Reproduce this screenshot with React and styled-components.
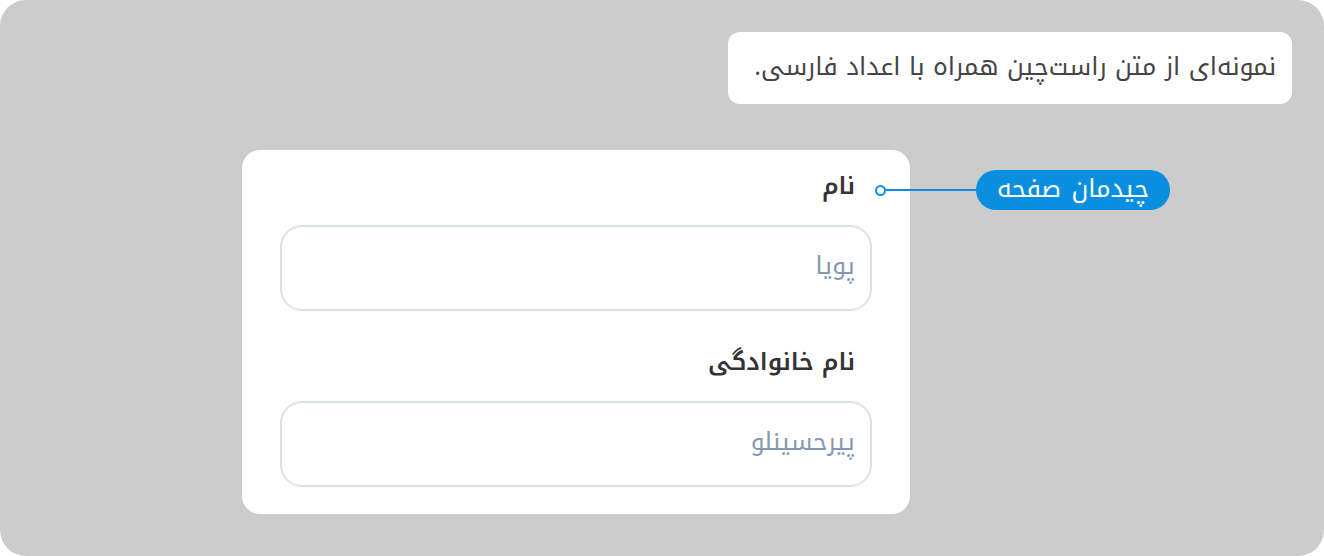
import React from "react";
import styled, { createGlobalStyle } from "styled-components";

const FONT = `"Noto Kufi Arabic", "DejaVu Sans", sans-serif`;

const Global = createGlobalStyle`
  html, body { margin: 0; padding: 0; background: #ffffff; }
  body { font-family: ${FONT}; }
`;

const Canvas = styled.div`
  position: relative;
  width: 1324px;
  height: 556px;
  background: #cccccc;
  border-radius: 26px;
  display: flex;
  flex-direction: column;
  box-sizing: border-box;
  padding-top: 32px;
`;

const Note = styled.div`
  align-self: flex-end;
  margin-right: 32px;
  width: 564px;
  height: 72px;
  box-sizing: border-box;
  background: #ffffff;
  border-radius: 12px;
  direction: rtl;
  display: flex;
  align-items: center;
  padding: 0 16px 2px 8px;
  font-size: 25px;
  line-height: 30px;
  white-space: nowrap;
  color: #454545;
`;

const FormCard = styled.form`
  margin: 46px 0 0 242px;
  width: 668px;
  height: 364px;
  box-sizing: border-box;
  background: #ffffff;
  border-radius: 18px;
  direction: rtl;
  padding: 22px 38px 0;
  display: flex;
  flex-direction: column;
`;

const Label = styled.label`
  display: block;
  padding-right: 17px;
  font-size: 24px;
  line-height: 28px;
  font-weight: 600;
  color: #333333;
  margin-top: ${(p) => p.$top}px;
  margin-bottom: 25px;
`;

const Input = styled.input`
  direction: rtl;
  width: 100%;
  height: 86px;
  box-sizing: border-box;
  border: 2px solid #d9e1ec;
  border-radius: 22px;
  padding: 0 15px 4px;
  font-family: ${FONT};
  font-size: 24.5px;
  color: #3a3a3a;
  background: #ffffff;
  outline: none;
  &::placeholder { color: #8797b2; }
`;

const Annotation = styled.div`
  position: absolute;
  left: 875px;
  top: 170px;
  display: flex;
  align-items: center;
`;

const Dot = styled.span`
  width: 7px;
  height: 7px;
  border: 2px solid #0a8fe0;
  border-radius: 50%;
  background: #ffffff;
`;

const Line = styled.span`
  width: 90px;
  height: 2px;
  background: #0a8fe0;
`;

const Pill = styled.div`
  direction: rtl;
  width: 194px;
  height: 40px;
  box-sizing: border-box;
  border-radius: 20px;
  background: #0a8fe0;
  color: #ffffff;
  font-size: 25px;
  line-height: 30px;
  word-spacing: 2px;
  white-space: nowrap;
  display: flex;
  align-items: center;
  justify-content: center;
  padding-bottom: 3px;
`;

export default function App() {
  return (
    <>
      <Global />
      <Canvas>
        <Note>نمونه‌ای از متن راست‌چین همراه با اعداد فارسی.</Note>
        <FormCard onSubmit={(e) => e.preventDefault()}>
          <Label $top={0} htmlFor="fn">نام</Label>
          <Input id="fn" placeholder="پویا" />
          <Label $top={37} htmlFor="ln">نام خانوادگی</Label>
          <Input id="ln" placeholder="پیرحسینلو" />
        </FormCard>
        <Annotation>
          <Dot />
          <Line />
          <Pill>چیدمان صفحه</Pill>
        </Annotation>
      </Canvas>
    </>
  );
}
